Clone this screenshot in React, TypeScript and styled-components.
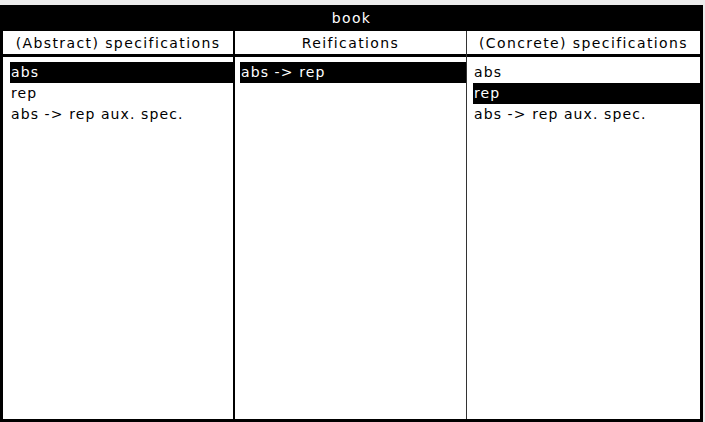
import React from 'react';
import styled, { createGlobalStyle } from 'styled-components';

const GlobalStyle = createGlobalStyle`
  html, body {
    margin: 0;
    padding: 0;
    background: #ececec;
  }
  body {
    font-family: "DejaVu Sans", sans-serif;
  }
`;

const Window = styled.div`
  width: 703px;
  height: 417px;
  margin-top: 5px;
  box-sizing: border-box;
  border: 3px solid #000;
  border-top: none;
  background: #fff;
  display: flex;
  flex-direction: column;
`;

const TitleBar = styled.div`
  height: 26px;
  background: #000;
  color: #fff;
  font-size: 14px;
  letter-spacing: 1.3px;
  display: flex;
  align-items: center;
  justify-content: center;
`;

const Columns = styled.div`
  flex: 1;
  display: grid;
  grid-template-columns: 232px 232px 1fr;
`;

const Column = styled.div<{ $divider?: 'thick' | 'thin' | 'none' }>`
  display: flex;
  flex-direction: column;
  border-right: ${p =>
    p.$divider === 'thick' ? '2px solid #000' : p.$divider === 'thin' ? '1px solid #333' : 'none'};
  min-height: 0;
`;

const ColumnHeader = styled.div`
  height: 23px;
  border-bottom: 3px solid #000;
  font-size: 14px;
  letter-spacing: 1.4px;
  color: #000;
  display: flex;
  align-items: center;
  justify-content: center;
  white-space: nowrap;
`;

const List = styled.ul<{ $inset: number }>`
  list-style: none;
  margin: 0;
  padding: 5px 0 0 ${p => p.$inset}px;
  flex: 1;
`;

const Item = styled.li<{ $selected?: boolean }>`
  height: 21px;
  line-height: 21px;
  padding-left: 1px;
  font-size: 14px;
  letter-spacing: 1.1px;
  white-space: nowrap;
  background: ${p => (p.$selected ? '#000' : 'transparent')};
  color: ${p => (p.$selected ? '#fff' : '#000')};
`;

type Panel = {
  title: string;
  items: string[];
  selected: number;
  divider: 'thick' | 'thin' | 'none';
  inset: number;
};

const panels: Panel[] = [
  {
    title: '(Abstract) specifications',
    items: ['abs', 'rep', 'abs -> rep aux. spec.'],
    selected: 0,
    divider: 'thick',
    inset: 7,
  },
  { title: 'Reifications', items: ['abs -> rep'], selected: 0, divider: 'thin', inset: 5 },
  {
    title: '(Concrete) specifications',
    items: ['abs', 'rep', 'abs -> rep aux. spec.'],
    selected: 1,
    divider: 'none',
    inset: 6,
  },
];

const App: React.FC = () => (
  <>
    <GlobalStyle />
    <Window>
      <TitleBar>book</TitleBar>
      <Columns>
        {panels.map(panel => (
          <Column key={panel.title} $divider={panel.divider}>
            <ColumnHeader>{panel.title}</ColumnHeader>
            <List $inset={panel.inset}>
              {panel.items.map((item, i) => (
                <Item key={item} $selected={i === panel.selected}>
                  {item}
                </Item>
              ))}
            </List>
          </Column>
        ))}
      </Columns>
    </Window>
  </>
);

export default App;
